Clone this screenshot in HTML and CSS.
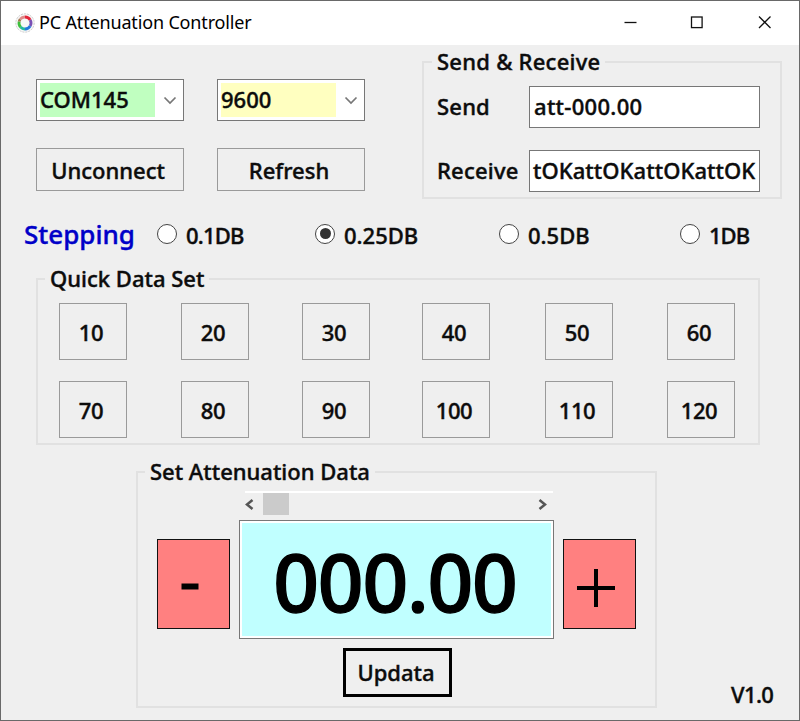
FILE: index.html
```html
<!DOCTYPE html>
<html lang="en">
<head>
<meta charset="utf-8">
<title>PC Attenuation Controller</title>
<link rel="stylesheet" href="styles.css">
</head>
<body>
<div class="window">
  <header class="titlebar">
    <svg class="app-icon" width="20" height="20" viewBox="0 0 20 20">
      <circle cx="10" cy="10" r="9.2" fill="#f7f7f7" stroke="#ccc" stroke-width="1" stroke-dasharray="2 1"/>
      <g fill="none" stroke-width="2.8">
        <path d="M5.2 6.2A6 6 0 0 1 10 4" stroke="#e08a8a"/>
        <path d="M10 4A6 6 0 0 1 15.2 7" stroke="#e3263a"/>
        <path d="M15.2 7A6 6 0 0 1 15.2 13" stroke="#7a50b4"/>
        <path d="M15.2 13A6 6 0 0 1 10 16" stroke="#2478dc"/>
        <path d="M10 16A6 6 0 0 1 5.5 14" stroke="#25b8a0"/>
        <path d="M5.5 14A6 6 0 0 1 4.2 8.5" stroke="#3cbf3c"/>
        <path d="M4.2 8.5A6 6 0 0 1 5.2 6.2" stroke="#a07850"/>
      </g>
    </svg>
    <h1 class="title">PC Attenuation Controller</h1>
    <svg class="controls" width="148" height="14" viewBox="0 0 148 14" fill="none" stroke="#111" stroke-width="1.3">
      <path d="M0.500 6.500H12.500"/><rect x="67.500" y="1" width="10.6" height="10.6"/><path d="M135 0.500L146.500 12M146.500 0.500L135 12"/>
    </svg>
  </header>
  <main class="client">
    <section class="top">
      <div class="connection">
        <div class="combo"><span class="value green">COM145</span><svg width="14" height="9" viewBox="0 0 14 9"><path d="M1.500 1.500L7 7L12.500 1.500" fill="none" stroke="#777" stroke-width="1.700"/></svg></div>
        <div class="combo"><span class="value yellow">9600</span><svg width="14" height="9" viewBox="0 0 14 9"><path d="M1.500 1.500L7 7L12.500 1.500" fill="none" stroke="#777" stroke-width="1.700"/></svg></div>
        <button class="btn">Unconnect</button>
        <button class="btn">Refresh</button>
      </div>
      <fieldset class="group serial">
        <legend>Send &amp; Receive</legend>
        <div class="field"><label>Send</label><div class="input">att-000.00</div></div>
        <div class="field"><label>Receive</label><div class="input tail">tOKattOKattOKattOK</div></div>
      </fieldset>
    </section>
    <section class="stepping">
      <span class="step-title">Stepping</span>
      <label class="radio"><i class="dot"></i><span>0.1DB</span></label>
      <label class="radio"><i class="dot on"></i><span>0.25DB</span></label>
      <label class="radio"><i class="dot"></i><span>0.5DB</span></label>
      <label class="radio"><i class="dot"></i><span>1DB</span></label>
    </section>
    <fieldset class="group quick">
      <legend>Quick Data Set</legend>
      <div class="keys">
        <button class="btn">10</button><button class="btn">20</button><button class="btn">30</button><button class="btn">40</button><button class="btn">50</button><button class="btn">60</button>
        <button class="btn">70</button><button class="btn">80</button><button class="btn">90</button><button class="btn">100</button><button class="btn">110</button><button class="btn">120</button>
      </div>
    </fieldset>
    <section class="bottom">
      <fieldset class="group attenuation">
        <legend>Set Attenuation Data</legend>
        <div class="scroll">
          <svg width="9" height="11" viewBox="0 0 9 11"><path d="M7.500 1L2 5.500L7.500 10" fill="none" stroke="#555" stroke-width="2.500"/></svg>
          <span class="thumb"></span>
          <svg class="right" width="9" height="11" viewBox="0 0 9 11"><path d="M1.500 1L7 5.500L1.500 10" fill="none" stroke="#555" stroke-width="2.500"/></svg>
        </div>
        <div class="dial">
          <button class="adjust" aria-label="Decrease"><svg width="38" height="38" viewBox="0 0 38 38"><path d="M6.500 18.500H23.500" stroke="#000" stroke-width="6"/></svg></button>
          <div class="display">000.00</div>
          <button class="adjust" aria-label="Increase"><svg width="38" height="38" viewBox="0 0 38 38"><path d="M-4 20H34M15 1V39" stroke="#000" stroke-width="4"/></svg></button>
        </div>
        <button class="btn update">Updata</button>
      </fieldset>
      <span class="version">V1.0</span>
    </section>
  </main>
</div>
</body>
</html>
```
FILE: styles.css
```css
* { box-sizing: border-box; }
body { margin: 0; font: 500 22px/28px "Noto Sans", "Open Sans", sans-serif; letter-spacing: 0; color: #0c0c0c; -webkit-text-stroke: 0.4px currentColor; }
svg { overflow: visible; }
.window { width: 800px; height: 721px; border: 1px solid #696969; background: #efefef; overflow: hidden; }
.titlebar { height: 44px; background: #fff; display: flex; align-items: center; padding-left: 14px; }
.title { margin: 0 0 2px 4px; font-size: 18px; font-weight: 400; letter-spacing: -0.16px; color: #000; white-space: nowrap; -webkit-text-stroke: 0; }
.controls { margin-left: auto; margin-right: 27px; }
.client { padding-top: 3px; }
.top { display: flex; height: 151px; padding-left: 35px; }
.connection { display: grid; grid-template-columns: 148px 148px; grid-template-rows: 42px 43px; column-gap: 33px; row-gap: 27px; padding-top: 31px; align-content: start; }
.combo { border: 1px solid #777; background: #fff; display: flex; align-items: center; padding: 3px; }
.combo svg { margin-left: 8px; }
.value { width: 115px; height: 34px; line-height: 32px; }
.green { background: #c0ffc0; }
.yellow { background: #ffffc0; }
.btn { border: 1px solid #9a9a9a; background: #efefef; color: inherit; font: inherit; letter-spacing: inherit; padding: 0 4px 0 0; border-radius: 0; }
.group { border: 2px solid #e1e1e1; margin: 0; padding: 0; min-width: 0; }
legend { padding: 0 5px; margin-left: 7px; height: 28px; line-height: 27px; white-space: nowrap; }
.serial { width: 360px; height: 151px; margin-left: 57px; padding: 10px 20px 0 13px; }
.serial legend { margin-left: -5px; letter-spacing: 0.25px; }
.field { display: flex; height: 42px; margin-bottom: 22px; align-items: center; }
.field label { width: 92px; white-space: nowrap; line-height: 26px; padding-bottom: 2px; letter-spacing: 0.2px; }
.input { width: 231px; height: 42px; border: 1px solid #777; background: #fff; line-height: 38px; padding: 0 4px; white-space: nowrap; overflow: hidden; letter-spacing: 0.3px; }
.tail { padding: 0 3px; letter-spacing: 0.05px; }
.stepping { height: 67px; padding: 3px 0 0 23px; display: grid; grid-template-columns: 133px 158px 184px 181px 80px; align-items: center; }
.step-title { color: #0000c8; font-size: 26px; }
.radio { display: flex; align-items: center; }
.radio span { padding-top: 1px; }
.radio:first-of-type span { letter-spacing: -0.8px; }
.radio:last-of-type span { letter-spacing: -1px; }
.dot { width: 20px; height: 20px; border: 1.5px solid #444; border-radius: 50%; background: #fff; margin: 0 9px 1px 0; display: grid; place-items: center; }
.on::before { content: ""; width: 11px; height: 11px; border-radius: 50%; background: #333; }
.quick { width: 724px; height: 180px; margin-left: 35px; margin-top: -1px; }
.keys { display: grid; grid-template-columns: 122px 121px 120px 123px 122px 68px; grid-template-rows: 57px 57px; row-gap: 21px; padding: 10px 0 0 21px; }
.keys .btn { width: 68px; padding: 0 4px 0 0; letter-spacing: -0.4px; }
.bottom { display: flex; margin-top: 13px; padding-left: 135px; align-items: flex-end; }
.attenuation { width: 521px; height: 250px; }
.scroll { width: 308px; height: 26px; margin: 5px 0 0 107px; border-top: 2px solid #fff; display: flex; align-items: center; padding-bottom: 2px; }
.thumb { width: 26px; height: 22px; background: #cbcbcb; margin-left: 9px; }
.right { margin-left: auto; margin-right: 6px; }
.dial { display: flex; align-items: center; margin: 3px 0 0 19px; gap: 9px; }
.adjust { width: 73px; height: 90px; border: 1px solid #111; background: #ff8080; padding: 6px 0 0; display: grid; place-items: center; margin: 8px 0 0; }
.display { width: 315px; height: 119px; border: 1px solid #777; background: #c0ffff; box-shadow: inset 0 0 0 2px #fff; font-size: 80px; line-height: 120px; letter-spacing: -1.2px; text-align: center; color: #000; padding-right: 3px; -webkit-text-stroke: 1.4px #000; }
.update { display: block; width: 109px; height: 49px; border: 3px solid #000; margin: 9px auto 0 205px; padding: 0 3px 2px 0; }
.version { margin-left: 74px; margin-bottom: 0; letter-spacing: -0.6px; }
```
